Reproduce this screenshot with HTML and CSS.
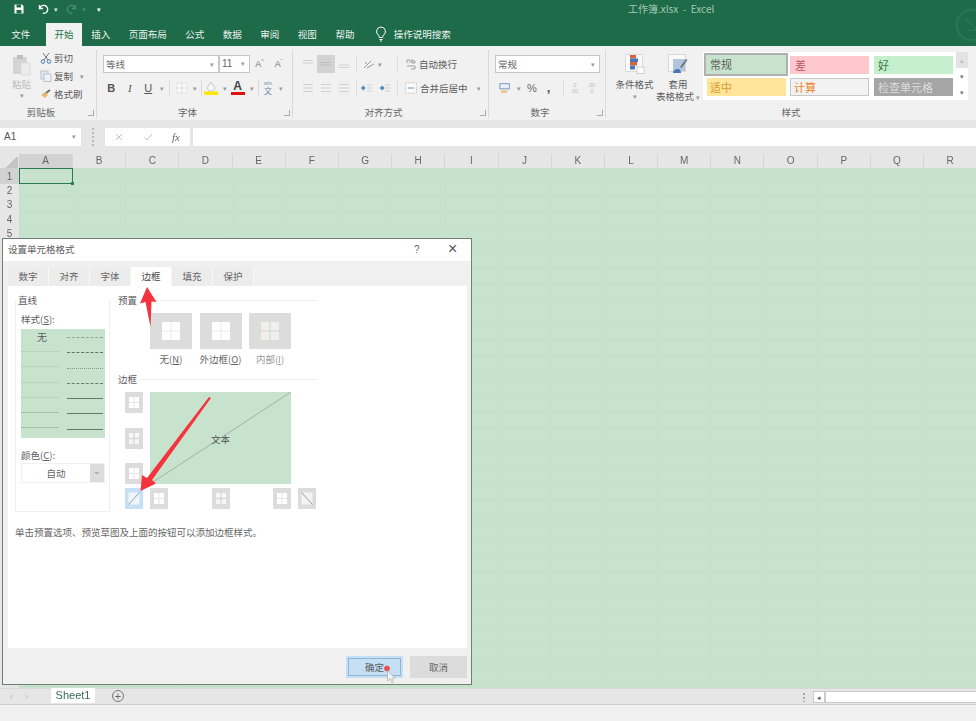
FILE: index.html
```html
<!DOCTYPE html>
<html lang="zh-CN">
<head>
<meta charset="utf-8">
<title>工作簿.xlsx - Excel</title>
<link rel="stylesheet" href="styles.css">
</head>
<body>
<svg class="defs" width="0" height="0" aria-hidden="true">
  <symbol id="lines3" viewBox="0 0 12 10"><path d="M1 1.500h10M1 5h10M1 8.500h10" stroke="currentColor" fill="none"/></symbol>
  <symbol id="box" viewBox="0 0 18 21"><rect width="18" height="21" fill="#dcdcdc"/><rect x="4" y="5" width="10" height="11" fill="#fff"/><path d="M9 5v11M4 10.500h10" stroke="#e6e6e6"/></symbol>
  <symbol id="boxthick" viewBox="0 0 18 21"><rect width="18" height="21" fill="#dcdcdc"/><rect x="4" y="5" width="10" height="11" fill="#f7f7f7"/><path d="M9 5v11M4 10.500h10" stroke="#d8d8d8" stroke-width="1.400"/></symbol>
  <symbol id="preset" viewBox="0 0 42 36"><rect width="42" height="36" fill="#dcdcdc"/><rect x="12" y="9" width="18" height="18" fill="#fff"/><path d="M21 9v18M12 18h18" stroke="#e6e6e6" stroke-width=".8"/></symbol>
</svg>

<header class="titlebar">
  <div class="qat">
    <svg class="qi" viewBox="0 0 12 12"><path d="M1.500 1.500h7.500l1.500 1.500v7.500h-9z" fill="#fff"/><rect x="3.500" y="1.500" width="4.500" height="3" fill="#1e6b47"/><rect x="3.500" y="7" width="5" height="3.500" fill="#1e6b47"/></svg>
    <svg class="qi qi-undo" viewBox="0 0 12 12"><path d="M2.500 2v3.500h3.500M2.800 5.300a4 4 0 1 1 3 5" fill="none" stroke="#fff" stroke-width="1.400"/></svg>
    <span class="qcaret">▾</span>
    <svg class="qi qi-redo" viewBox="0 0 12 12"><path d="M9.500 2v3.500h-3.500M9.200 5.300a4 4 0 1 0 -3 5" fill="none" stroke="#4c8a6c" stroke-width="1.300"/></svg>
    <span class="qcaret qcaret-dim">▾</span>
    <span class="qcaret qcaret-end">▾</span>
  </div>
  <div class="doc-title">工作簿.xlsx &nbsp;-&nbsp; Excel</div>
  <svg class="watermark" viewBox="0 0 40 40"><circle cx="20" cy="20" r="17" fill="none" stroke="#277651" stroke-width="3"/><path d="M12 12l16 16M14 26h14v-12" fill="none" stroke="#277651" stroke-width="2"/></svg>
</header>

<nav class="tabs">
  <span class="tab tab-file">文件</span>
  <span class="tab tab-active">开始</span>
  <span class="tab">插入</span>
  <span class="tab">页面布局</span>
  <span class="tab">公式</span>
  <span class="tab">数据</span>
  <span class="tab">审阅</span>
  <span class="tab">视图</span>
  <span class="tab">帮助</span>
  <svg class="bulb" viewBox="0 0 12 16"><path d="M6 1a4.500 4.500 0 0 0-2.500 8.200c.6.500.7 1.300.8 2.300h3.400c.1-1 .2-1.800.8-2.300A4.500 4.500 0 0 0 6 1zM4.500 13.500h3M5 15h2" fill="none" stroke="#fff"/></svg>
  <span class="tab tab-search">操作说明搜索</span>
</nav>

<section class="ribbon">
  <div class="group g-clip">
    <div class="g-body clip-body">
      <div class="paste">
        <svg class="paste-ico" viewBox="0 0 20 22"><rect x="1" y="3" width="14" height="17" fill="#d4d4d4"/><rect x="5" y="1" width="6" height="4" fill="#bdbdbd"/><path d="M9 9h9v12h-9z" fill="#ececec" stroke="#dcdcdc"/></svg>
        <span class="paste-t">粘贴</span>
        <span class="caret paste-c">▾</span>
      </div>
      <div class="clip-list">
        <div class="clip-i"><svg class="ci" viewBox="0 0 12 12"><path d="M3 1l5 7M9 1l-5 7" stroke="#777" fill="none"/><circle cx="3" cy="9.500" r="1.800" fill="none" stroke="#4a7fb5"/><circle cx="9" cy="9.500" r="1.800" fill="none" stroke="#4a7fb5"/></svg><span>剪切</span></div>
        <div class="clip-i"><svg class="ci" viewBox="0 0 12 12"><rect x="1" y="1" width="7" height="8" fill="#dfe8f1" stroke="#b8c4d0"/><rect x="4" y="4" width="7" height="7.500" fill="#eef2f6" stroke="#b8c4d0"/></svg><span>复制</span><span class="caret clip-c">▾</span></div>
        <div class="clip-i"><svg class="ci" viewBox="0 0 12 12"><path d="M1 7l4-3 3 3-3 3z" fill="#e8b96a"/><path d="M6 5l4-3" stroke="#666" stroke-width="1.600"/></svg><span>格式刷</span></div>
      </div>
    </div>
    <div class="g-label">剪贴板<i class="launch"></i></div>
  </div>

  <div class="group g-font">
    <div class="g-body col-body">
      <div class="row r-top">
        <span class="combo c-font">等线<span class="caret">▾</span></span>
        <span class="combo c-size">11<span class="caret">▾</span></span>
        <span class="growa">A<sup>^</sup></span>
        <span class="growa">A<sup>ˇ</sup></span>
      </div>
      <div class="row r-bot font-tools">
        <b class="ft">B</b><i class="ft ft-i">I</i><span class="ft ft-u">U</span><span class="caret ft-c">▾</span>
        <span class="vsep"></span>
        <svg class="ft-bd" viewBox="0 0 12 12"><rect x="1" y="1" width="10" height="10" fill="#fafafa" stroke="#e0e0e0"/><path d="M6 1v10M1 6h10" stroke="#ddd"/></svg>
        <span class="caret ft-c">▾</span>
        <span class="vsep"></span>
        <svg class="ft-fill" viewBox="0 0 14 14"><path d="M7 1l4 6-2 3H5L3 7z" fill="#f6f6f6" stroke="#c8c8c8"/><rect y="10.500" width="14" height="3.500" fill="#ffe600"/></svg>
        <span class="caret ft-c">▾</span>
        <span class="fcolor">A</span>
        <span class="caret ft-c">▾</span>
        <span class="vsep"></span>
        <span class="wen"><small>wén</small><span>文</span></span>
        <span class="caret ft-c">▾</span>
      </div>
    </div>
    <div class="g-label">字体<i class="launch"></i></div>
  </div>

  <div class="group g-align">
    <div class="g-body col-body">
      <div class="row r-top al-top">
        <svg class="al" viewBox="0 0 12 10"><path d="M1 1.500h10M1 4h10" stroke="#d0d0d0" fill="none"/></svg>
        <span class="al-on"><svg class="al" viewBox="0 0 12 10"><path d="M1 3.500h10M1 6h10" stroke="#bbb" fill="none"/></svg></span>
        <svg class="al" viewBox="0 0 12 10"><path d="M1 6h10M1 8.500h10" stroke="#d0d0d0" fill="none"/></svg>
        <span class="vsep vsep-l"></span>
        <span class="orient"><svg class="or-i" viewBox="0 0 12 10"><path d="M1 9L8 2M4 9l7-4M2 3l3 3" stroke="#999" fill="none"/></svg><span class="caret">▾</span></span>
        <span class="vsep vsep-l"></span>
        <span class="wrap-t"><svg class="ab" viewBox="0 0 10 12"><path d="M1 5V2h3v3M6 1v4h3V3H6M1 8h8v3H5" stroke="#8d8d8d" fill="none" stroke-width=".8"/></svg>自动换行</span>
      </div>
      <div class="row r-bot al-bot">
        <svg class="al al-m" viewBox="0 0 12 10"><use href="#lines3"/></svg>
        <svg class="al al-m" viewBox="0 0 12 10"><use href="#lines3"/></svg>
        <svg class="al al-m" viewBox="0 0 12 10"><use href="#lines3"/></svg>
        <span class="vsep vsep-l"></span>
        <svg class="ind ind-first" viewBox="0 0 14 10"><path d="M5 5H1M3.500 2.500L1 5l2.500 2.500" stroke="#3f7fc0" stroke-width="1.500" fill="none"/><path d="M7 1.500h6M7 5h6M7 8.500h6" stroke="#cdcdcd"/></svg>
        <svg class="ind" viewBox="0 0 14 10"><path d="M1 5h4M3 2.500L5.500 5 3 7.500" stroke="#3f7fc0" stroke-width="1.500" fill="none"/><path d="M7 1.500h6M7 5h6M7 8.500h6" stroke="#cdcdcd"/></svg>
        <span class="vsep vsep-l"></span>
        <span class="merge"><svg class="mg" viewBox="0 0 13 12"><rect x=".5" y=".5" width="12" height="11" fill="#fafafa" stroke="#c9c9c9" stroke-dasharray="2 1"/><path d="M3 6h7" stroke="#5a8fc4"/></svg>合并后居中<span class="caret merge-c">▾</span></span>
      </div>
    </div>
    <div class="g-label">对齐方式<i class="launch"></i></div>
  </div>

  <div class="group g-num">
    <div class="g-body col-body">
      <div class="row r-top"><span class="combo c-num">常规<span class="caret">▾</span></span></div>
      <div class="row r-bot num-tools">
        <svg class="cur" viewBox="0 0 14 12"><rect x="1" y="1" width="11" height="6" fill="#e9eff6" stroke="#6a8db3"/><ellipse cx="6" cy="10" rx="4" ry="1.800" fill="#eec58c"/></svg>
        <span class="caret num-c">▾</span>
        <span class="pct">%</span>
        <span class="comma">,</span>
        <span class="vsep vsep-n"></span>
        <span class="dec">.0<br>.00</span>
        <span class="dec">.00<br>.0</span>
      </div>
    </div>
    <div class="g-label">数字<i class="launch"></i></div>
  </div>

  <div class="group g-style">
    <div class="g-body style-body">
      <div class="big">
        <svg class="big-i" viewBox="0 0 20 20"><rect x=".5" y=".5" width="17" height="17" fill="#fafafa" stroke="#d9d9d9"/><rect x="5" y="1" width="6" height="3.500" fill="#d8663a"/><rect x="5" y="4.500" width="8" height="3.500" fill="#4778b5"/><rect x="5" y="8" width="7" height="3.500" fill="#d8663a"/><rect x="5" y="11.500" width="5" height="4" fill="#4778b5"/><rect x="12" y="13" width="7" height="6.500" fill="#fff" stroke="#cfcfcf"/></svg>
        <span>条件格式</span>
        <span class="caret">▾</span>
      </div>
      <div class="big big-t">
        <svg class="big-i" viewBox="0 0 20 20"><rect x=".5" y=".5" width="17" height="17" fill="#fafafa" stroke="#d9d9d9"/><rect x="5" y="5" width="12" height="12" fill="#b3c4de"/><path d="M12 13l6-8 1.500 1-6 8z" fill="#6c7480"/><path d="M5 19c0-3 3-4 5-4s3 2 3 4z" fill="#4778b5"/></svg>
        <span>套用</span>
        <span>表格格式 <i class="caret">▾</i></span>
      </div>
      <div class="gallery">
        <span class="st st-normal">常规</span>
        <span class="st st-bad">差</span>
        <span class="st st-good">好</span>
        <span class="st st-neutral">适中</span>
        <span class="st st-calc">计算</span>
        <span class="st st-check">检查单元格</span>
      </div>
      <div class="scroller"><span class="sc-up">▴</span><span>▾</span><span>▾</span></div>
    </div>
    <div class="g-label g-label-c">样式</div>
  </div>
</section>

<section class="formula">
  <div class="namebox">A1<span class="caret">▾</span></div>
  <div class="fdots"></div>
  <div class="fbtns">
    <svg class="fb" viewBox="0 0 10 10"><path d="M2 2l6 6M8 2l-6 6" stroke="#c4c4c4" fill="none"/></svg>
    <svg class="fb" viewBox="0 0 10 10"><path d="M1.500 5.500L4 8l5-6" stroke="#c4c4c4" fill="none"/></svg>
    <i class="fx">fx</i>
  </div>
  <div class="finput"></div>
</section>

<section class="sheet">
  <div class="colhead">
    <span class="corner"></span>
    <span class="ch ch-on">A</span><span class="ch">B</span><span class="ch">C</span><span class="ch">D</span><span class="ch">E</span><span class="ch">F</span><span class="ch">G</span><span class="ch">H</span><span class="ch">I</span><span class="ch">J</span><span class="ch">K</span><span class="ch">L</span><span class="ch">M</span><span class="ch">N</span><span class="ch">O</span><span class="ch">P</span><span class="ch">Q</span><span class="ch">R</span>
  </div>
  <div class="gridwrap">
    <div class="rowhead">
      <span class="rh rh-on">1</span><span class="rh">2</span><span class="rh">3</span><span class="rh">4</span><span class="rh">5</span>
    </div>
    <div class="cells"><span class="selcell"></span></div>
  </div>
</section>

<footer class="sheetbar">
  <span class="nav">‹</span><span class="nav">›</span>
  <span class="sheettab">Sheet1</span>
  <span class="addsheet">+</span>
  <span class="sb-dots"></span>
  <span class="sb-left">◂</span>
  <span class="sb-track"></span>
</footer>
<div class="status"></div>

<div class="dialog">
  <div class="d-title"><span>设置单元格格式</span><span class="d-help">?</span><span class="d-close">×</span></div>
  <div class="d-tabs">
    <span class="dt">数字</span><span class="dt">对齐</span><span class="dt">字体</span><span class="dt dt-on">边框</span><span class="dt">填充</span><span class="dt">保护</span>
  </div>
  <div class="d-page">
    <div class="d-main">
      <div class="line-col">
        <div class="legend">直线</div>
        <div class="lbl lbl-style">样式(<u>S</u>):</div>
        <div class="stylelist">
          <div class="sl-col">
            <span class="none-t">无</span>
            <span class="ln l-dot"></span><span class="ln l-dot"></span><span class="ln l-dot"></span><span class="ln l-dot"></span><span class="ln l-sol"></span><span class="ln l-sol"></span>
          </div>
          <div class="sl-col sl-right">
            <span class="ln l-dd"></span><span class="ln l-dk"></span><span class="ln l-dot2"></span><span class="ln l-dk2"></span><span class="ln l-m"></span><span class="ln l-t"></span><span class="ln l-m"></span>
          </div>
        </div>
        <div class="lbl lbl-color">颜色(<u>C</u>):</div>
        <div class="colorcombo"><span class="cc-t">自动</span><span class="cc-b">⌄</span></div>
      </div>
      <div class="right-col">
        <div class="sect"><span>预置</span><i></i></div>
        <div class="presets">
          <div class="pre"><svg class="pre-i" viewBox="0 0 42 36"><use href="#preset"/></svg><span>无(<u>N</u>)</span></div>
          <div class="pre"><svg class="pre-i" viewBox="0 0 42 36"><use href="#preset"/></svg><span>外边框(<u>O</u>)</span></div>
          <div class="pre pre-off"><svg class="pre-i" viewBox="0 0 42 36"><rect width="42" height="36" fill="#dcdcdc"/><rect x="12" y="9" width="18" height="18" fill="#f3eeee"/><path d="M21 9v18M12 18h18" stroke="#dcdcdc" stroke-width="1.500"/></svg><span>内部(<u>I</u>)</span></div>
        </div>
        <div class="sect sect-b"><span>边框</span><i></i></div>
        <div class="border-area">
          <div class="side">
            <svg class="bb" viewBox="0 0 18 21"><use href="#box"/></svg>
            <svg class="bb" viewBox="0 0 18 21"><use href="#boxthick"/></svg>
            <svg class="bb" viewBox="0 0 18 21"><use href="#box"/></svg>
          </div>
          <div class="preview">
            <svg class="diag" viewBox="0 0 141 92" preserveAspectRatio="none"><path d="M0 92L141 0" stroke="#9fb3a4" fill="none"/></svg>
            <span class="pv-t">文本</span>
          </div>
        </div>
        <div class="bottom-btns">
          <svg class="bb bb-sel" viewBox="0 0 18 21"><rect width="18" height="21" fill="#c5dff5"/><rect x="3.500" y="4.500" width="11" height="12" fill="#eef5fb"/><path d="M3.500 16.500l11-12" stroke="#999"/></svg>
          <svg class="bb" viewBox="0 0 18 21"><use href="#box"/></svg>
          <svg class="bb bb-m1" viewBox="0 0 18 21"><use href="#boxthick"/></svg>
          <svg class="bb bb-m2" viewBox="0 0 18 21"><use href="#box"/></svg>
          <svg class="bb bb-m3" viewBox="0 0 18 21"><rect width="18" height="21" fill="#dcdcdc"/><rect x="3.500" y="4.500" width="11" height="12" fill="#f3f3f3"/><path d="M3.500 4.500l11 12" stroke="#999"/></svg>
        </div>
      </div>
    </div>
    <div class="hint">单击预置选项、预览草图及上面的按钮可以添加边框样式。</div>
  </div>
  <div class="d-foot">
    <span class="btn btn-ok">确定</span>
    <span class="btn">取消</span>
  </div>
</div>

<svg class="overlay" viewBox="0 0 976 721" aria-hidden="true">
  <path d="M147 287L156.500 302L151.500 301.500L150.500 327L145.500 302L140 303.500Z" fill="#f4333c"/>
  <path d="M140.500 491L142 475L147 478L209 397L211 398L152 480L156 483.500Z" fill="#f4333c"/>
  <circle cx="387" cy="668.500" r="2.800" fill="#ee4b4b"/>
  <path d="M387.500 670.500v10.500l2.500-2.200 2 4 1.500-.8-2-3.800h3.500z" fill="#f4f4f4" stroke="#a9a9a9" stroke-width=".7"/>
</svg>
</body>
</html>
```
FILE: styles.css
```css
* { box-sizing: border-box; }
html, body { margin: 0; padding: 0; height: 721px; overflow: hidden; }
body {
  position: relative;
  width: 976px;
  display: flex;
  flex-direction: column;
  font-family: "Noto Sans CJK SC", "Noto Sans", sans-serif;
  font-size: 9.500px;
  color: #5c5c5c;
  background: #f1f1f1;
  filter: blur(.45px);
}
.defs { position: absolute; }
u { text-decoration: underline; }

/* title bar */
.titlebar { position: relative; height: 23px; background: #1d6b48; display: flex; align-items: flex-start; flex: none; }
.qat { display: flex; align-items: center; padding-left: 13px; height: 17px; }
.qi { width: 12px; height: 12px; flex: none; }
.qi-undo { margin-left: 12px; }
.qi-redo { margin-left: 7px; }
.qcaret { width: 6px; text-align: center; color: #d9e6df; font-size: 7px; margin-left: 4px; }
.qcaret-dim { color: #4c8a6c; margin-left: 3px; }
.qcaret-end { margin-left: 9px; color: #fff; }
.doc-title { position: absolute; left: 628px; top: 0; line-height: 17px; color: #a7c8b6; font-size: 10px; white-space: nowrap; }
.watermark { position: absolute; right: -14px; top: 7px; width: 36px; height: 36px; }

/* tabs */
.tabs { height: 23px; background: #1d6b48; display: flex; align-items: stretch; flex: none; padding-left: 2px; }
.tab { color: #fff; font-size: 9.500px; line-height: 22px; padding: 0 9.250px; white-space: nowrap; opacity: .92; }
.tab-active { background: #f1f1f1; color: #217346; padding: 0 8.500px; margin: 0 0 0 6.500px; opacity: 1; }
.bulb { width: 12px; height: 16px; margin: 3px 4px 0 11px; }
.tab-search { padding: 0 0 0 3px; }

/* ribbon */
.ribbon { height: 74px; flex: none; display: flex; background: #f1f1f1; }
.group { display: flex; flex-direction: column; flex: none; position: relative; border-right: 1px solid #dadada; margin: 4px 0 2px; }
.g-body { height: 56px; flex: none; }
.g-label { position: relative; flex: 1; text-align: center; font-size: 9.500px; line-height: 13px; color: #666; padding-right: 14px; }
.g-label-c { padding-right: 0; }
.launch { position: absolute; right: 2px; top: 4px; width: 6px; height: 6px; border-right: 1px solid #aaa; border-bottom: 1px solid #aaa; }
.g-clip { width: 97px; }
.g-font { width: 196px; }
.g-align { width: 196px; }
.g-num { width: 117px; }
.g-style { flex: 1; border-right: 0; }
.caret { color: #999; font-size: 7px; font-style: normal; }

.clip-body { display: flex; padding: 0 0 0 10px; }
.paste { width: 23px; display: flex; flex-direction: column; align-items: center; color: #bbb; }
.paste-ico { width: 20px; height: 22px; margin-top: 4px; flex: none; }
.paste-t { font-size: 9.500px; line-height: 12px; margin-top: 2px; }
.paste-c { line-height: 10px; }
.clip-list { margin: -1px 0 0 7px; }
.clip-i { height: 18px; display: flex; align-items: center; font-size: 9.500px; color: #5c5c5c; white-space: nowrap; }
.ci { width: 12px; height: 12px; margin-right: 2px; flex: none; }
.clip-c { margin-left: 7px; }

.col-body { display: flex; flex-direction: column; }
.row { display: flex; align-items: center; }
.r-top { height: 19px; margin-top: 4px; }
.r-bot { height: 19px; margin-top: 5px; }
.combo { position: relative; height: 18px; background: #fff; border: 1px solid #c6c6c6; color: #666; line-height: 16px; padding-left: 2px; font-size: 9.500px; }
.combo .caret { position: absolute; right: 4px; top: 0; }
.c-font { width: 116px; margin-left: 6px; }
.c-size { width: 31px; font-family: "Liberation Sans", sans-serif; font-size: 10px; }
.growa { width: 19px; text-align: center; font-size: 9px; color: #777; font-family: "Liberation Sans", sans-serif; }
.growa sup { font-size: 5px; line-height: 0; }

.font-tools { padding-left: 5px; }
.ft { width: 18.500px; text-align: center; font-family: "Liberation Sans", sans-serif; font-size: 11px; color: #555; }
.ft-i { font-family: "Liberation Serif", serif; }
.ft-u { text-decoration: underline; }
.ft-c { width: 9px; text-align: center; margin-left: 2.500px; flex: none; }
.ft-u + .ft-c { margin-left: 0; }
.vsep { width: 1px; height: 16px; background: #dcdcdc; margin: 0 2px; flex: none; }
.ft-bd { width: 12px; height: 12px; margin: 0 0 0 4px; flex: none; }
.ft-fill { width: 14px; height: 14px; flex: none; }
.fcolor { width: 14px; margin-left: 1px; height: 14px; text-align: center; font: bold 12px/11px "Liberation Sans", sans-serif; color: #444; border-bottom: 3px solid #e01010; flex: none; }
.wen { width: 12px; margin-left: 1px; text-align: center; color: #6d86a3; font-size: 8px; line-height: 9px; display: flex; flex-direction: column; flex: none; }
.wen small { font-size: 4px; line-height: 5px; }

.al { width: 12px; height: 10px; color: #cfcfcf; flex: none; }
.al-top { padding-left: 9px; gap: 6px; }
.al-on { width: 18px; height: 18px; background: #d2d2d2; display: flex; align-items: center; justify-content: center; margin: 0 0 0 -3px; }
.al-on + .al { margin-left: -3px; }
.vsep-l { margin: 0; }
.orient { width: 28px; display: flex; align-items: center; }
.or-i { width: 12px; height: 10px; }
.orient .caret { margin-left: 3px; }
.wrap-t { display: flex; align-items: center; font-size: 9.500px; color: #5c5c5c; white-space: nowrap; margin-left: 2px; }
.ab { width: 10px; height: 12px; margin-right: 3px; }
.al-bot { padding-left: 9px; gap: 6px; }
.ind { width: 12px; height: 10px; flex: none; }
.ind-first { margin-left: -2px; }
.merge { display: flex; align-items: center; font-size: 9.500px; color: #5c5c5c; white-space: nowrap; margin-left: 1px; }
.mg { width: 12px; height: 12px; margin-right: 3px; flex: none; }
.merge-c { margin-left: 9px; }

.c-num { width: 105px; margin-left: 6px; }
.num-tools { padding-left: 10px; }
.cur { width: 12px; height: 12px; flex: none; }
.num-c { margin-left: 6px; }
.pct { margin-left: 6px; font: 11px "Liberation Sans", sans-serif; color: #666; }
.comma { margin-left: 10px; font: bold 13px/10px "Liberation Sans", sans-serif; color: #555; width: 8px; }
.vsep-n { margin: 0 2px 0 8px; }
.dec { width: 17px; font: 5.500px/6px "Liberation Sans", sans-serif; color: #bbb; text-align: center; }

.style-body { display: flex; padding-left: 7px; }
.big { width: 43px; display: flex; flex-direction: column; align-items: center; font-size: 9.500px; line-height: 12px; color: #5c5c5c; white-space: nowrap; }
.big-i { width: 20px; height: 20px; margin-top: 4px; margin-bottom: 4px; flex: none; }
.big-t { width: 44px; }
.gallery { width: 253px; height: 48px; background: #fff; margin: 2px 0 0 3px; padding: 1px 0 0 1px; display: grid; grid-template-columns: 84px 86px 79px; grid-template-rows: 24px 20px; align-items: start; flex: none; }
.st { height: 18px; font-size: 11px; line-height: 18px; padding-left: 5px; white-space: nowrap; overflow: hidden; }
.st-normal { height: 23px; background: #c7e3cd; border: 2px solid #b0b0b0; color: #5c5c5c; line-height: 19px; padding-left: 4px; }
.st-bad { background: #ffc7ce; color: #b9545c; margin: 3px 0 0 2px; width: 79px; }
.st-good { background: #c6efce; color: #3c7a45; margin-top: 3px; padding-left: 4px; }
.st-neutral { background: #ffe59a; color: #d69a33; margin: 1px 2px 0 3px; padding-left: 3px; }
.st-calc { background: #f2f2f2; color: #f08020; border: 1px solid #c8c8c8; line-height: 16px; margin: 1px 0 0 2px; width: 79px; padding-left: 3px; }
.st-check { background: #a5a5a5; color: #ddd; margin-top: 1px; padding-left: 4px; }
.scroller { width: 12px; height: 48px; margin: 2px 0 0 0; display: flex; flex-direction: column; background: #fff; color: #777; font-size: 7px; line-height: 16px; text-align: center; }
.sc-up { background: #e3e3e3; color: #bbb; }

/* formula bar */
.formula { height: 26px; flex: none; display: flex; align-items: stretch; background: #e6e6e6; padding: 8px 0 0 0; }
.namebox { position: relative; width: 81px; background: #fff; font: 10px/18px "Liberation Sans", sans-serif; padding-left: 4px; color: #555; }
.namebox .caret { position: absolute; right: 5px; top: 0; }
.fdots { width: 24px; background: radial-gradient(circle, #b8b8b8 1px, transparent 1.200px) center / 4px 4px repeat-y; }
.fbtns { width: 85px; background: #fff; display: flex; align-items: center; padding-left: 9px; margin-right: 3px; }
.fb { width: 10px; height: 10px; margin-right: 19px; flex: none; }
.fx { font: italic 11px "Liberation Serif", serif; color: #666; }
.finput { flex: 1; background: #fff; }

/* sheet */
.sheet { flex: 1; display: flex; flex-direction: column; min-height: 0; }
.colhead { height: 22px; padding-top: 8px; display: flex; background: #e6e6e6; flex: none; }
.corner { width: 19px; flex: none; background: linear-gradient(135deg, transparent 50%, #c4c4c4 50%) 5px 3px / 13px 11px no-repeat; }
.ch { width: 53.200px; flex: none; text-align: center; font: 10px/14px "Liberation Sans", sans-serif; color: #666; border-right: 1px solid #d5d5d5; }
.ch-on { background: #d2d2d2; width: 54px; }
.gridwrap { flex: 1; display: flex; min-height: 0; }
.rowhead { width: 19px; flex: none; display: flex; flex-direction: column; background: #e6e6e6; }
.rh { height: 14.400px; font: 10px/14.400px "Liberation Sans", sans-serif; text-align: center; color: #666; }
.rh-on { background: #d2d2d2; height: 16px; line-height: 17px; }
.cells {
  position: relative;
  flex: 1;
  background-color: #c8e3cd;
  background-image: linear-gradient(to right, #c5e0ca 1px, transparent 1px), linear-gradient(to bottom, #c5e0ca 1px, transparent 1px);
  background-size: 53.200px 14.400px;
  background-position: 53px 14px;
}
.selcell { position: absolute; left: 0; top: 0; width: 54px; height: 16px; border: 1px solid #2b7a55; }
.selcell::after { content: ""; position: absolute; right: -2px; bottom: -2px; width: 3px; height: 3px; background: #2b7a55; }

/* sheet bar */
.sheetbar { height: 17px; flex: none; display: flex; align-items: flex-start; background: #e6e6e6; border-top: 1px solid #d8d8d8; border-bottom: 1px solid #cfcfcf; }
.nav { width: 15px; margin-left: 4px; text-align: center; color: #c2c2c2; font: 11px/15px "Liberation Sans", sans-serif; }
.nav + .nav { margin-left: 0; }
.sheettab { width: 44px; height: 15px; margin: -1px 0 0 17px; background: #fff; color: #3a6b58; text-align: center; font: 11px/15px "Liberation Sans", sans-serif; }
.addsheet { width: 12px; height: 12px; border: 1px solid #777; border-radius: 50%; margin: 1px 0 0 17px; text-align: center; color: #666; font: 11px/10px "Liberation Sans", sans-serif; }
.sb-dots { width: 4px; height: 10px; margin: 3px 0 0 678px; background: radial-gradient(circle, #aaa 1px, transparent 1.200px) 0 0 / 4px 4px; }
.sb-left { width: 12px; height: 12px; margin: 2px 0 0 7px; background: #fff; border: 1px solid #ccc; font-size: 7px; line-height: 10px; text-align: center; color: #555; }
.sb-track { flex: 1; height: 12px; margin: 2px 0 0 0; background: #fff; border: 1px solid #ccc; border-right: 0; }
.status { height: 16px; flex: none; background: #f1f1f1; }

/* dialog */
.dialog { position: absolute; left: 2px; top: 238px; width: 470px; height: 447px; display: flex; flex-direction: column; background: #f0f0f0; border: 1px solid #6f7f76; }
.d-title { height: 22px; flex: none; background: #fff; display: flex; align-items: center; padding: 0 0 2px 5px; font-size: 9.500px; color: #5c5c5c; }
.d-title span:first-child { flex: 1; }
.d-help { width: 34px; font: 10px "Liberation Sans", sans-serif; color: #666; }
.d-close { width: 23px; font: 16px "Liberation Sans", sans-serif; color: #555; }
.d-tabs { height: 25px; flex: none; display: flex; align-items: flex-end; padding-left: 5px; }
.dt { width: 41px; height: 19px; text-align: center; line-height: 19px; font-size: 9.500px; color: #666; background: #ececec; border-right: 1px solid #f7f7f7; }
.dt-on { background: #fff; color: #444; }
.d-page { height: 362px; margin: 0 4px 0 5px; background: #fff; flex: none; padding: 7px 7px 0 7px; }
.d-main { display: flex; }
.line-col { width: 95px; height: 212px; flex: none; border: 1px solid #f0f0f0; border-top: 0; padding: 0 5px; margin-top: 7px; }
.legend { font-size: 9.500px; line-height: 14px; margin: -7px 0 0 -3px; color: #5c5c5c; }
.lbl { font-size: 9.500px; color: #5c5c5c; line-height: 14px; }
.lbl-style { margin-top: 5px; }
.stylelist { display: flex; width: 84px; height: 109px; margin-top: 3px; background: #c8e3cd; }
.sl-col { width: 42px; display: flex; flex-direction: column; }
.none-t { text-align: center; font-size: 10px; line-height: 15px; height: 15px; color: #5c5c5c; }
.ln { display: block; margin: 14.300px 0 0; height: 1px; flex: none; }
.sl-col .none-t + .ln { margin-top: 7px; }
.l-dot { border-top: 1px dotted #a9c6af; margin-right: 4px; }
.l-sol { border-top: 1px solid #a4bfa9; margin-right: 4px; }
.sl-right { padding: 8px 2px 0 4px; }
.sl-right .ln:first-child { margin-top: 0; }
.l-dd { border-top: 1px dashed #8fa894; }
.l-dk { border-top: 1px dashed #5d7463; }
.l-dot2 { border-top: 1px dotted #7f9a85; }
.l-dk2 { border-top: 1px dashed #66806c; }
.l-m { border-top: 1px solid #5f7a65; }
.l-t { border-top: 1px solid #5f7a65; }
.lbl-color { margin-top: 10px; }
.colorcombo { display: flex; width: 84px; height: 20px; margin-top: 1px; border: 1px solid #f0f0f0; }
.cc-t { flex: 1; text-align: center; line-height: 18px; font-size: 9.500px; color: #666; }
.cc-b { width: 14px; background: #dcdcdc; text-align: center; line-height: 14px; color: #888; font-size: 9px; }
.right-col { margin-left: 8px; flex: none; width: 200px; }
.sect { display: flex; align-items: center; height: 14px; font-size: 9.500px; color: #5c5c5c; }
.sect i { flex: 1; height: 1px; background: #f0f0f0; margin-left: 3px; }
.presets { display: flex; margin: 6px 0 0 32px; gap: 7.500px; }
.pre { width: 42px; display: flex; flex-direction: column; align-items: center; font-size: 9.500px; line-height: 14px; color: #666; white-space: nowrap; }
.pre-i { width: 42px; height: 36px; margin-bottom: 3px; flex: none; }
.pre-off { color: #999; }
.sect-b { margin-top: 6px; }
.border-area { display: flex; margin: 6px 0 0 7px; }
.side { width: 18px; height: 92px; display: flex; flex-direction: column; justify-content: space-between; }
.bb { width: 18px; height: 21px; flex: none; }
.preview { position: relative; width: 141px; height: 92px; margin-left: 7px; background: #c8e3cd; display: flex; align-items: center; justify-content: center; padding-top: 2px; }
.diag { position: absolute; left: 0; top: 0; width: 141px; height: 92px; }
.pv-t { position: relative; font-size: 9.500px; color: #555; }
.bottom-btns { display: flex; margin: 4px 0 0 7px; width: 191px; }
.bb-sel + .bb { margin-left: 7px; }
.bb-m1 { margin-left: 44px; }
.bb-m2 { margin-left: 43px; }
.bb-m3 { margin-left: 7px; }
.hint { margin-top: 13px; font-size: 9.500px; line-height: 14px; color: #666; white-space: nowrap; }
.d-foot { flex: 1; display: flex; justify-content: flex-end; align-items: flex-start; gap: 7px; padding: 8px 4px 0 0; }
.btn { width: 57px; height: 22px; background: #dcdcdc; text-align: center; line-height: 22px; font-size: 9.500px; color: #666; }
.btn-ok { background: #c5dff5; outline: 1px solid #8fb4d4; outline-offset: -3px; color: #5c5c5c; }

.overlay { position: absolute; left: 0; top: 0; width: 976px; height: 721px; pointer-events: none; }
```
